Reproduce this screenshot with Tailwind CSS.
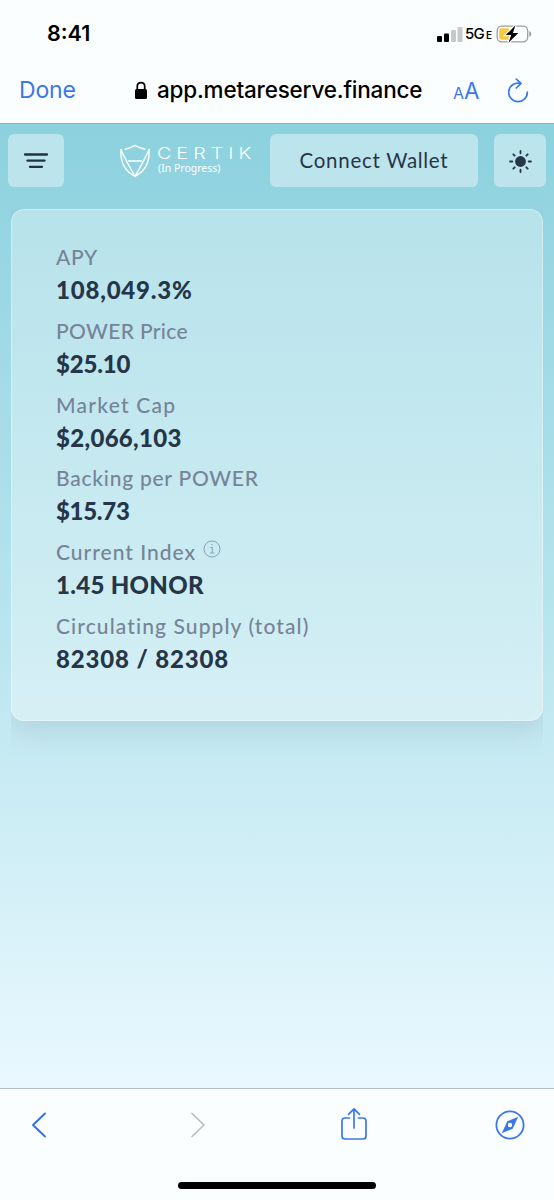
<!DOCTYPE html>
<html lang="en">
<head>
    <meta charset="UTF-8">
    <meta name="viewport" content="width=device-width, initial-scale=1.0">
    <title>MetaReserve</title>
    <script src="https://cdn.jsdelivr.net/npm/@tailwindcss/browser@4"></script>
</head>
<body class="w-[554px] h-[1200px] flex flex-col overflow-hidden bg-[#fbfefe] font-['Inter',sans-serif] text-black">

    <!-- Status bar -->
    <div class="h-[58px] shrink-0 flex items-center justify-between pl-[47px] pr-[22px] pt-[9px]">
        <span class="text-[21.5px] font-semibold leading-none">8:41</span>
        <div class="flex items-center">
            <svg class="w-[26px] h-[16px]" viewBox="0 0 26 16">
                <rect x="0" y="10" width="5" height="6" rx="1" fill="#000"/>
                <rect x="7" y="7.5" width="5" height="8.5" rx="1" fill="#000"/>
                <rect x="14" y="4" width="5" height="12" rx="1" fill="#c6c8ca"/>
                <rect x="20.5" y="1" width="5" height="15" rx="1" fill="#c6c8ca"/>
            </svg>
            <span class="ml-[2px] w-[21px] text-[15px] font-medium leading-none tracking-[-0.8px]">5G</span>
            <span class="w-[10px] text-[10px] font-semibold leading-none pt-[3px]">E</span>
            <svg class="w-[36px] h-[18px]" viewBox="0 0 36 18">
                <rect x="1.2" y="1.2" width="30.5" height="15.6" rx="4.5" fill="none" stroke="#9a9d9e" stroke-width="1.3"/>
                <path d="M5.5 3.2H13V14.8H5.5Q3.2 14.8 3.2 12.5V5.5Q3.2 3.2 5.5 3.2Z" fill="#f5c944"/>
                <path d="M33.3 6Q35.3 7 35.3 9T33.3 12Z" fill="#9a9d9e"/>
                <path d="M19.5 0.3L9.8 10.1H15.2L12.5 17.8L22.3 7.9H16.9Z" fill="#000" stroke="#fbfefe" stroke-width="2.4" paint-order="stroke"/>
            </svg>
        </div>
    </div>

    <!-- Address bar -->
    <div class="h-[66px] shrink-0 flex items-center pl-[19px] border-b border-[#83b4bd]">
        <span class="w-[115px] text-[23px] leading-none text-[#3b78e7] tracking-[-0.2px]">Done</span>
        <svg class="w-[14px] h-[19px] shrink-0" viewBox="0 0 14 19">
            <rect x="1" y="8" width="12" height="10" rx="1.6" fill="#000"/>
            <path d="M3.3 9V5.2C3.3 0.3 10.7 0.3 10.7 5.2V9" fill="none" stroke="#000" stroke-width="1.7"/>
        </svg>
        <span class="ml-[9px] w-[296px] text-[22.5px] font-medium leading-[28px] tracking-[-0.2px] pb-[2px]">app.metareserve.finance</span>
        <span class="flex items-baseline w-[53px] text-[#3b78e7] leading-none pt-[2px]"><span class="text-[16px]">A</span><span class="text-[22.5px]">A</span></span>
        <svg class="w-[24px] h-[26px] shrink-0" viewBox="0 0 24 26" fill="none" stroke="#3b78e7" stroke-width="1.7" stroke-linecap="round" stroke-linejoin="round">
            <path d="M14.5 5.4A9.3 9.3 0 1 0 21.3 14.2"/>
            <path d="M10.3 1.2L15 5.4L10.3 10"/>
        </svg>
    </div>

    <!-- Page -->
    <main class="flex-1 flex flex-col bg-linear-to-b from-[#8cd1de] via-[#b6e4ed] via-50% to-[#eaf8ff] text-[#263548] font-['Lato',sans-serif]">
        <header class="h-[85px] shrink-0 flex items-start pt-[10px] pl-2">
            <button class="w-[56px] h-[53px] rounded-md bg-white/40 flex items-center justify-center">
                <svg class="w-[26px] h-[18px]" viewBox="0 0 26 18" stroke="#203244" stroke-width="2.3" stroke-linecap="round">
                    <path d="M2 2.5H24M4.5 8.7H21.5M7 14.8H19"/>
                </svg>
            </button>
            <div class="ml-[56px] w-[150px] pt-[10px] flex text-white">
                <svg class="w-[30px] h-[34px] shrink-0" viewBox="0 0 30 34" fill="none" stroke="#fff" stroke-width="1.4" stroke-linejoin="round" stroke-linecap="round">
                    <path d="M5.2 5.2Q11 4 15 1.4Q19 4 24.8 5.2"/>
                    <path d="M1 5.5C0.2 17 3.5 26.5 15 32.3C26.5 26.5 29.8 17 29 5.5"/>
                    <path d="M1 5.5C4 13 9 22 15 32.3C21 22 26 13 29 5.5M8.5 17H21.5"/>
                </svg>
                <div class="ml-[7px] pt-[2px]">
                    <!-- CERTIK wordmark -->
                    <div class="w-[80px] text-[16px] leading-[15px] tracking-[4.1px] origin-left scale-x-[1.23] whitespace-nowrap font-['Inter',sans-serif] font-light">CERTIK</div>
                    <div class="pl-px text-[10.5px] leading-[14px] whitespace-nowrap font-['Noto_Sans',sans-serif]">(In Progress)</div>
                </div>
            </div>
            <button class="w-[208px] h-[53px] rounded-md bg-white/40 text-[20.5px] tracking-[0.7px]">Connect Wallet</button>
            <button class="ml-4 w-[52px] h-[53px] rounded-md bg-white/40 flex items-center justify-center">
                <svg class="w-[24px] h-[24px]" viewBox="0 0 24 24" stroke="#263548" stroke-width="1.8" stroke-linecap="round">
                    <circle cx="12.5" cy="12.5" r="5.4" fill="#263548" stroke="none"/>
                    <path d="M12.5 2V4.3M12.5 20.7V23M2 12.5H4.3M20.7 12.5H23M5.3 5.3L6.7 6.7M18.3 18.3L19.7 19.7M5.3 19.7L6.7 18.3M18.3 6.7L19.7 5.3"/>
                </svg>
            </button>
        </header>

        <!-- Wrapper clips the shadow at the card's sides -->
        <div class="mx-[11px] pb-[60px] overflow-hidden">
            <section class="h-[512px] rounded-[13px] border border-white/35 bg-white/33 shadow-[0_10px_28px_rgba(110,125,150,0.2)] pl-[44px] pt-[30px]">
                <div class="h-[73.8px]">
                    <p class="h-[33px] leading-[33px] text-[21px] font-medium text-[#768498] tracking-[0.6px]">APY</p>
                    <p class="h-[33px] leading-[33px] text-[24px] font-black tracking-[0.8px]">108,049.3%</p>
                </div>
                <div class="h-[73.8px]">
                    <p class="h-[33px] leading-[33px] text-[21px] font-medium text-[#768498] tracking-[0.35px]">POWER Price</p>
                    <p class="h-[33px] leading-[33px] text-[24px] font-black tracking-[-0.2px]">$25.10</p>
                </div>
                <div class="h-[73.8px]">
                    <p class="h-[33px] leading-[33px] text-[21px] font-medium text-[#768498] tracking-[1.25px]">Market Cap</p>
                    <p class="h-[33px] leading-[33px] text-[24px] font-black tracking-[0.3px]">$2,066,103</p>
                </div>
                <div class="h-[73.8px]">
                    <p class="h-[33px] leading-[33px] text-[21px] font-medium text-[#768498] tracking-[0.75px]">Backing per POWER</p>
                    <p class="h-[33px] leading-[33px] text-[24px] font-black tracking-[-0.3px]">$15.73</p>
                </div>
                <div class="h-[73.8px]">
                    <div class="flex h-[33px] leading-[33px] text-[21px] font-medium text-[#768498] tracking-[1px]">
                        <p class="w-[147px]">Current Index</p>
                        <svg class="w-[18px] h-[18px] mt-[5px]" viewBox="0 0 18 18" fill="none" stroke="#8ba3b2" stroke-width="1">
                            <circle cx="9" cy="9" r="8"/>
                            <path d="M7.3 7.5H9.3V13M7 13H11.3"/>
                            <circle cx="9" cy="4.8" r="0.8" fill="#8ba3b2" stroke="none"/>
                        </svg>
                    </div>
                    <p class="h-[33px] leading-[33px] text-[24px] font-black tracking-[0.3px]">1.45 HONOR</p>
                </div>
                <div class="h-[73.8px]">
                    <p class="h-[33px] leading-[33px] text-[21px] font-medium text-[#768498] tracking-[1.1px]">Circulating Supply (total)</p>
                    <p class="h-[33px] leading-[33px] text-[24px] font-black tracking-[0.85px]">82308 / 82308</p>
                </div>
            </section>
        </div>
    </main>

    <!-- Browser toolbar -->
    <nav class="h-[112px] shrink-0 border-t border-[#b4c2c8] flex flex-col items-center justify-between pb-[11px]">
        <div class="w-full h-[72px] pl-[31px] flex items-center">
            <svg class="w-[16px] h-[26px]" viewBox="0 0 16 26" fill="none" stroke="#3070e6" stroke-width="1.9" stroke-linecap="round" stroke-linejoin="round"><path d="M14 1.5L2 13L14 24.5"/></svg>
            <svg class="ml-[143px] w-[16px] h-[26px]" viewBox="0 0 16 26" fill="none" stroke="#b9bdbf" stroke-width="1.7" stroke-linecap="round" stroke-linejoin="round"><path d="M2 1.5L14 13L2 24.5"/></svg>
            <svg class="ml-[134px] mb-[3px] w-[28px] h-[34px]" viewBox="0 0 28 34" fill="none" stroke="#3b78e7" stroke-width="1.7" stroke-linecap="round" stroke-linejoin="round">
                <path d="M9.5 11H5Q2 11 2 14V29Q2 32 5 32H23Q26 32 26 29V14Q26 11 23 11H18.5"/>
                <path d="M14 21V2M8.5 7.3L14 1.8L19.5 7.3"/>
            </svg>
            <svg class="ml-[127px] w-[30px] h-[30px]" viewBox="0 0 30 30" fill="none" stroke="#3b78e7" stroke-width="1.8">
                <circle cx="15" cy="15" r="13.6"/>
                <path fill-rule="evenodd" d="M23.2 6.8L12.3 11.3L6.8 23.2L17.7 18.7Z M15 12.8A2.2 2.2 0 1 0 15 17.2A2.2 2.2 0 1 0 15 12.8Z" fill="#3b78e7" stroke="none"/>
            </svg>
        </div>
        <div class="w-[198px] h-[7px] rounded-full bg-black"></div>
    </nav>
</body>
</html>
